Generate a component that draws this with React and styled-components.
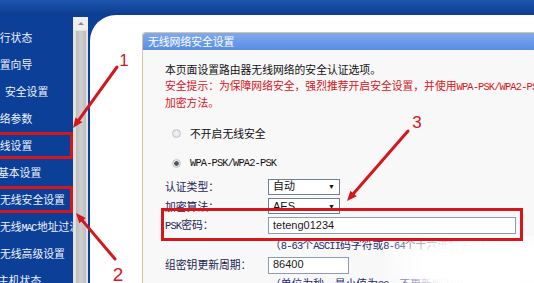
import React from "react";
import styled, { createGlobalStyle } from "styled-components";

const GlobalStyle = createGlobalStyle`
  html, body {
    margin: 0;
    padding: 0;
    background: #ffffff;
  }
`;

const CJK = `"Noto Sans CJK SC", "Noto Sans", sans-serif`;
const MONO = `"Liberation Mono", "DejaVu Sans Mono", monospace`;
const RED = "#d3171d";

const Page = styled.div`
  position: relative;
  width: 534px;
  height: 283px;
  overflow: hidden;
  background: #0c3f98;
  font-family: ${CJK};
  display: flex;
  flex-direction: column;
`;

const TopBar = styled.div`
  height: 15px;
  flex: none;
  background: linear-gradient(#1f56ad, #0b3c92);
`;

const Body = styled.div`
  flex: 1;
  display: flex;
  min-height: 0;
`;

const Sidebar = styled.ul`
  width: 73px;
  flex: none;
  margin: 0;
  padding: 8.5px 0 0;
  list-style: none;
  overflow: hidden;
`;

const MenuItem = styled.li`
  height: 27px;
  box-sizing: border-box;
  line-height: 21px;
  white-space: nowrap;
  font-size: 10.8px;
  color: #eef3ff;
  text-indent: ${(p) => p.$indent}px;
  border: 3px solid ${(p) => (p.$marked ? RED : "transparent")};
  border-left: none;
`;

const Narrow = styled.span`
  font-family: ${MONO};
  font-size: 10px;
  letter-spacing: -1.2px;
  margin-right: 1px;
`;

const Scrollbar = styled.div`
  width: 15px;
  flex: none;
  margin-top: 2px;
  background: #e2e2e2;
  display: flex;
  flex-direction: column;
  align-items: center;
`;

const ScrollArrow = styled.div`
  width: 15px;
  height: 13px;
  display: flex;
  align-items: center;
  justify-content: center;
  background: #eeeeee;
  &::before {
    content: "";
    border-left: 3px solid transparent;
    border-right: 3px solid transparent;
    border-bottom: 3px solid #8a8a8a;
  }
`;

const ScrollThumb = styled.div`
  flex: 1;
  width: 10px;
  margin-top: 1px;
  background: linear-gradient(90deg, #bcbcbc, #cfcfcf 50%, #bdbdbd);
`;

const Main = styled.main`
  flex: 1;
  margin-left: 2px;
  background: #ffffff;
  border-top-left-radius: 26px;
  padding: 17px 0 0 52px;
  overflow: hidden;
  min-width: 0;
`;

const Box = styled.section`
  border: 1px solid #d5c49c;
  border-right: none;
  border-bottom: none;
  border-top-left-radius: 4px;
  background: #f8f8f8;
  height: 260px;
`;

const Title = styled.h2`
  margin: 0;
  height: 17px;
  line-height: 17px;
  padding-left: 5px;
  font-size: 10.8px;
  font-weight: normal;
  color: #ffffff;
  background: linear-gradient(#7eaaf0, #5a8ce2);
  border-top-left-radius: 3px;
`;

const Content = styled.div`
  padding: 12px 0 0 22px;
  font-size: 10.8px;
  line-height: 15.5px;
`;

const Line = styled.div`
  white-space: nowrap;
  color: ${(p) => (p.$red ? "#d8141c" : "#111111")};
`;

const Ascii = styled.span`
  font-family: ${MONO};
  font-size: 10.4px;
  letter-spacing: -0.85px;
`;

const RadioRow = styled.label`
  display: flex;
  align-items: center;
  height: 15.5px;
  margin-top: ${(p) => p.$gap}px;
  padding-left: 7px;
  gap: 9px;
  color: #111111;
  white-space: nowrap;
`;

const Radio = styled.span`
  width: 9px;
  height: 9px;
  box-sizing: border-box;
  border-radius: 50%;
  border: 1px solid #c4c4c4;
  background: radial-gradient(circle, ${(p) => (p.$checked ? "#555 0 2px, #e6e6e6 2.5px" : "#f4f4f4 0, #dedede 100%")});
`;

const Form = styled.div`
  display: grid;
  grid-template-columns: 103px 1fr;
  grid-auto-rows: 19.6px;
  align-items: center;
  margin-top: 5.5px;
`;

const Label = styled.div`
  color: #1c2452;
  white-space: nowrap;
  position: relative;
`;

const Field = styled.div`
  display: flex;
  align-items: center;
  white-space: nowrap;
  grid-column: ${(p) => (p.$wide ? "2" : "auto")};
`;

const SelectBox = styled.div`
  width: 72px;
  height: 16px;
  box-sizing: border-box;
  border: 1px solid #6f7f96;
  background: #ffffff;
  display: flex;
  align-items: center;
  justify-content: space-between;
  padding: 0 4px 0 4px;
  font-size: 11px;
  color: #111;
  font-family: "Liberation Sans", ${CJK};
`;

const Caret = styled.span`
  font-size: 7px;
  color: #111;
`;

const TextBox = styled.div`
  width: ${(p) => p.$w}px;
  height: 17px;
  box-sizing: border-box;
  border: 1px solid #8c9bb3;
  background: #ffffff;
  padding-left: 4px;
  display: flex;
  align-items: center;
  font-family: "Liberation Sans", sans-serif;
  font-size: 11px;
  color: #1a1a1a;
`;

const Hint = styled.div`
  color: #1d2a6b;
  white-space: nowrap;
  padding-left: 2px;
`;

const PskMark = styled.div`
  position: absolute;
  left: -4px;
  top: -9.5px;
  width: 362px;
  height: 33px;
  box-sizing: border-box;
  border: 3px solid ${RED};
  pointer-events: none;
  z-index: 2;
`;

const Overlay = styled.svg`
  position: absolute;
  left: 0;
  top: 0;
  width: 534px;
  height: 283px;
  pointer-events: none;
  z-index: 3;
`;

const Fade = styled.div`
  position: absolute;
  left: 385px;
  top: 236px;
  width: 149px;
  height: 47px;
  background: radial-gradient(ellipse 75% 90% at 65% 60%, rgba(255, 255, 255, 0.97) 55%, rgba(255, 255, 255, 0) 100%);
  pointer-events: none;
  z-index: 1;
`;

const menu = [
  { text: "运行状态", indent: -11 },
  { text: "设置向导", indent: -11 },
  { text: "安全设置", indent: 5 },
  { text: "网络参数", indent: -11 },
  { text: "无线设置", indent: -11, marked: true },
  { text: "基本设置", indent: -2 },
  { text: "无线安全设置", indent: 0, marked: true },
  { text: "mac", indent: 0 },
  { text: "无线高级设置", indent: 0 },
  { text: "主机状态", indent: -2 },
];

function Arrow({ from, to, label, labelAt, size }) {
  const dx = to[0] - from[0];
  const dy = to[1] - from[1];
  const len = Math.hypot(dx, dy);
  const ux = dx / len;
  const uy = dy / len;
  const head = 10;
  const half = 4.2;
  const bx = to[0] - ux * head;
  const by = to[1] - uy * head;
  const pts = [
    [to[0], to[1]],
    [bx - uy * half, by + ux * half],
    [bx + uy * half, by - ux * half],
  ]
    .map((p) => p.join(","))
    .join(" ");
  return (
    <g>
      <line x1={from[0]} y1={from[1]} x2={bx} y2={by} stroke={RED} strokeWidth="3" strokeLinecap="round" />
      <polygon points={pts} fill={RED} />
      <text
        x={labelAt[0]}
        y={labelAt[1]}
        fill={RED}
        fontSize={size}
        fontFamily="Liberation Sans, sans-serif"
        textAnchor="middle"
      >
        {label}
      </text>
    </g>
  );
}

export default function App() {
  return (
    <>
      <GlobalStyle />
      <Page>
        <TopBar />
        <Body>
          <Sidebar>
            {menu.map((m, i) => (
              <MenuItem key={i} $indent={m.indent} $marked={m.marked}>
                {m.text === "mac" ? (
                  <>
                    无线<Narrow>MAC</Narrow>地址过滤
                  </>
                ) : (
                  m.text
                )}
              </MenuItem>
            ))}
          </Sidebar>
          <Scrollbar>
            <ScrollArrow />
            <ScrollThumb />
          </Scrollbar>
          <Main>
            <Box>
              <Title>无线网络安全设置</Title>
              <Content>
                <Line>本页面设置路由器无线网络的安全认证选项。</Line>
                <Line $red>
                  安全提示：为保障网络安全，强烈推荐开启安全设置，并使用<Ascii>WPA-PSK/WPA2-PSK AES</Ascii>
                </Line>
                <Line $red>加密方法。</Line>
                <RadioRow $gap={15.5}>
                  <Radio />
                  不开启无线安全
                </RadioRow>
                <RadioRow $gap={14.5}>
                  <Radio $checked />
                  <Ascii>WPA-PSK/WPA2-PSK</Ascii>
                </RadioRow>
                <Form>
                  <Label>认证类型：</Label>
                  <Field>
                    <SelectBox>
                      自动<Caret>▼</Caret>
                    </SelectBox>
                  </Field>
                  <Label>加密算法：</Label>
                  <Field>
                    <SelectBox>
                      AES<Caret>▼</Caret>
                    </SelectBox>
                  </Field>
                  <Label>
                    <PskMark />
                    <Ascii>PSK</Ascii>密码：
                  </Label>
                  <Field>
                    <TextBox $w={248}>teteng01234</TextBox>
                  </Field>
                  <Field $wide>
                    <Hint>
                      （<Ascii>8-63</Ascii>个<Ascii>ASCII</Ascii>码字符或<Ascii>8-64</Ascii>个十六进制字符）
                    </Hint>
                  </Field>
                  <Label>组密钥更新周期：</Label>
                  <Field>
                    <TextBox $w={81}>86400</TextBox>
                  </Field>
                  <Field $wide>
                    <Hint>
                      （单位为秒，最小值为<Ascii>30</Ascii>，不更新则为<Ascii>0</Ascii>）
                    </Hint>
                  </Field>
                </Form>
              </Content>
            </Box>
          </Main>
        </Body>
        <Fade />
        <Overlay viewBox="0 0 534 283">
          <Arrow from={[117, 67]} to={[73, 128]} label="1" labelAt={[124, 66]} size={17} />
          <Arrow from={[115, 259]} to={[76, 213]} label="2" labelAt={[118, 281]} size={19} />
          <Arrow from={[408, 131]} to={[347, 201]} label="3" labelAt={[417, 128]} size={17} />
        </Overlay>
      </Page>
    </>
  );
}
